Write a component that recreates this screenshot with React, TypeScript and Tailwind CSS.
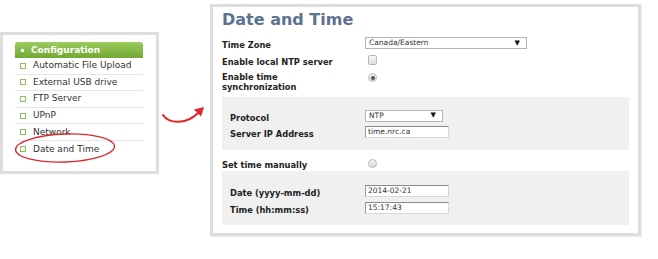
import React from "react";

const font = { fontFamily: '"DejaVu Sans", Verdana, sans-serif' };

function MenuRow({ label, last }: { label: string; last?: boolean }) {
  return (
    <div
      className={`flex items-center h-[16.6px] ${last ? "" : "border-b border-[#e6e6e6]"}`}
    >
      <span className="ml-[5px] w-[4px] h-[4px] border border-[#8fbf5a] box-content" />
      <span className="ml-[7px] text-[9px] leading-none text-[#333]">{label}</span>
    </div>
  );
}

function Label({ children }: { children: React.ReactNode }) {
  return <span className="text-[8.3px] font-bold leading-[10px] text-[#222]">{children}</span>;
}

function SelectBox({ value, w }: { value: string; w: string }) {
  return (
    <div
      className={`${w} h-[12px] border border-[#b5b5b5] bg-white flex items-center justify-between pl-[3px] pr-[6px]`}
    >
      <span className="text-[7.5px] leading-none text-[#333]">{value}</span>
      <span className="text-[7px] leading-none text-[#111]">▼</span>
    </div>
  );
}

function TextInput({ value }: { value: string }) {
  return (
    <div className="w-[84px] h-[12px] bg-white border border-[#d8d8d8] border-t-[#8a8a8a] border-l-[#9a9a9a] flex items-center pl-[2px]">
      <span className="text-[7.5px] leading-none text-[#333]">{value}</span>
    </div>
  );
}

function Radio({ checked }: { checked?: boolean }) {
  return (
    <span className="w-[9px] h-[9px] rounded-full border border-[#b8b8b8] bg-gradient-to-b from-[#f4f4f4] to-[#dcdcdc] flex items-center justify-center">
      {checked && <span className="w-[4px] h-[4px] rounded-full bg-[#555]" />}
    </span>
  );
}

function Checkbox() {
  return (
    <span className="w-[9px] h-[10px] rounded-[2px] border border-[#b8b8b8] bg-gradient-to-b from-[#f6f6f6] to-[#e0e0e0]" />
  );
}

export default function App() {
  return (
    <div className="w-[658px] h-[259px] bg-white flex items-start" style={font}>
      {/* Left menu panel */}
      <div className="relative mt-[32px] w-[159px] h-[142px] border-[3px] border-[#dedede] pl-[12px] pt-[7px]">
        <div className="w-[128px]">
          <div className="h-[16px] rounded-t-[3px] bg-gradient-to-b from-[#9ccc5c] to-[#72a833] flex items-center">
            <span className="ml-[6px] w-[3px] h-[3px] bg-white" />
            <span className="ml-[7px] text-[9px] font-bold leading-none text-white">Configuration</span>
          </div>
          <MenuRow label="Automatic File Upload" />
          <MenuRow label="External USB drive" />
          <MenuRow label="FTP Server" />
          <MenuRow label="UPnP" />
          <MenuRow label="Network" />
          <MenuRow label="Date and Time" last />
        </div>
        <svg
          className="absolute left-[10px] top-[97px]"
          width="104"
          height="33"
          viewBox="0 0 104 33"
          fill="none"
        >
          <ellipse cx="52" cy="16" rx="49.5" ry="14" stroke="#e0262a" strokeWidth="1.3" transform="rotate(-2 52 16)" />
        </svg>
      </div>

      {/* Arrow */}
      <div className="w-[51px] pt-[104px]">
        <svg width="51" height="24" viewBox="0 0 51 24" fill="none">
          <path d="M4 11 C 10 20, 28 21, 40 8" stroke="#e3262a" strokeWidth="2" strokeLinecap="round" fill="none" />
          <path d="M45 3 L35 5.5 L42 12.5 Z" fill="#e3262a" />
        </svg>
      </div>

      {/* Right settings panel */}
      <div className="mt-[4px] w-[431px] h-[232px] border-[3px] border-[#dedede] shadow-[1px_1px_0_#ececec] px-[9px] pt-[2px]">
        <div className="text-[16px] font-bold leading-[22px] text-[#5d7190]">Date and Time</div>

        <div className="mt-[6px] flex items-center h-[12px]">
          <div className="w-[143px]"><Label>Time Zone</Label></div>
          <SelectBox value="Canada/Eastern" w="w-[162px]" />
        </div>

        <div className="mt-[5px] flex items-center h-[12px]">
          <div className="w-[143px]"><Label>Enable local NTP server</Label></div>
          <span className="ml-[3px] flex"><Checkbox /></span>
        </div>

        <div className="mt-[6px] flex items-start h-[20px]">
          <div className="w-[143px] flex flex-col"><Label>Enable time</Label><Label>synchronization</Label></div>
          <span className="ml-[3px] mt-[1px] flex"><Radio checked /></span>
        </div>

        <div className="mt-[5px] h-[53px] bg-[#f0f0f0] pl-[8px] pt-[13px]">
          <div className="flex items-center h-[11px]">
            <div className="w-[135px]"><Label>Protocol</Label></div>
            <SelectBox value="NTP" w="w-[78px]" />
          </div>
          <div className="mt-[5px] flex items-center h-[12px]">
            <div className="w-[135px]"><Label>Server IP Address</Label></div>
            <TextInput value="time.nrc.ca" />
          </div>
        </div>

        <div className="mt-[7px] flex items-center h-[12px]">
          <div className="w-[143px]"><Label>Set time manually</Label></div>
          <span className="ml-[3px] flex"><Radio /></span>
        </div>

        <div className="mt-[2px] h-[54px] bg-[#f0f0f0] pl-[8px] pt-[14px]">
          <div className="flex items-center h-[12px]">
            <div className="w-[135px]"><Label>Date (yyyy-mm-dd)</Label></div>
            <TextInput value="2014-02-21" />
          </div>
          <div className="mt-[5px] flex items-center h-[12px]">
            <div className="w-[135px]"><Label>Time (hh:mm:ss)</Label></div>
            <TextInput value="15:17:43" />
          </div>
        </div>
      </div>
    </div>
  );
}
